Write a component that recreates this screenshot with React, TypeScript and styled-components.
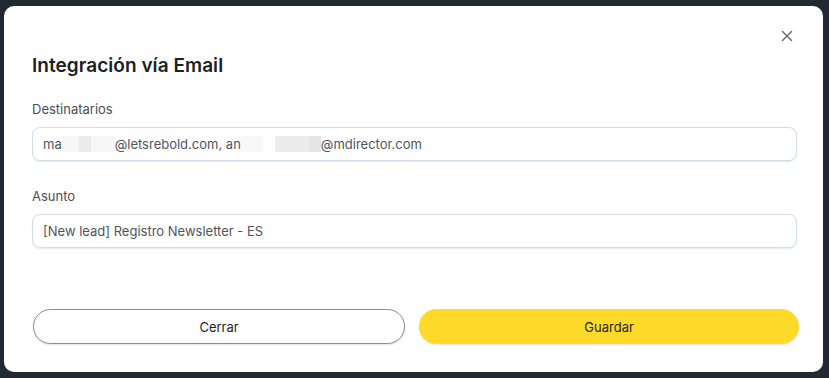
import React from "react";
import styled, { createGlobalStyle } from "styled-components";

const Global = createGlobalStyle`
  html, body { margin: 0; padding: 0; background: #222932; }
  body { font-family: Inter, "Noto Sans", "Liberation Sans", sans-serif; -webkit-font-smoothing: antialiased; }
  * { box-sizing: border-box; }
`;

const Backdrop = styled.div`
  width: 829px;
  height: 378px;
  padding: 6px 6px 6px 4px;
  background: #222932;
`;

const Modal = styled.div`
  position: relative;
  width: 819px;
  height: 366px;
  background: #ffffff;
  border-radius: 10px;
  padding: 48px 26px 28px 28px;
  display: flex;
  flex-direction: column;
`;

const CloseButton = styled.button`
  position: absolute;
  top: 21px;
  right: 27px;
  width: 18px;
  height: 18px;
  padding: 0;
  border: none;
  background: transparent;
  display: flex;
  align-items: center;
  justify-content: center;
  cursor: pointer;
`;

const Title = styled.h2`
  margin: 0 0 21px 0;
  font-size: 19px;
  line-height: 24px;
  font-weight: 600;
  color: #1c2024;
  letter-spacing: 0.05px;
`;

const Field = styled.div<{ $gap?: number }>`
  display: flex;
  flex-direction: column;
  gap: 8px;
  margin-bottom: ${(p) => p.$gap ?? 0}px;
`;

const Label = styled.label`
  font-size: 13px;
  line-height: 20px;
  color: #4a4f57;
  font-weight: 400;
`;

const InputBox = styled.div`
  height: 34px;
  border: 1px solid #cfdbe7;
  border-radius: 8px;
  padding: 0 10px;
  display: flex;
  align-items: center;
  font-size: 13px;
  color: #50555d;
  white-space: nowrap;
  box-shadow: 0 1px 1px rgba(180, 198, 220, 0.35);
`;

const Redact = styled.span<{ $w: number; $c: string }>`
  display: inline-block;
  width: ${(p) => p.$w}px;
  height: 16px;
  background: ${(p) => p.$c};
  vertical-align: middle;
`;

const Spacer = styled.div`
  flex: 1;
`;

const Footer = styled.div`
  display: flex;
  gap: 14px;
  padding: 0 0 0 1px;
  margin-right: -2px;
`;

const Button = styled.button<{ $primary?: boolean; $grow: number }>`
  flex: ${(p) => p.$grow} 1 0;
  height: 35px;
  border-radius: 18px;
  font-family: inherit;
  font-size: 13px;
  color: #1f2328;
  cursor: pointer;
  border: ${(p) => (p.$primary ? "1px solid #fed928" : "1px solid #8c8c8c")};
  background: ${(p) => (p.$primary ? "#fed928" : "#ffffff")};
  box-shadow: 0 1px 2px rgba(0, 0, 0, 0.12);
`;

export default function App() {
  return (
    <>
      <Global />
      <Backdrop>
        <Modal>
          <CloseButton aria-label="Cerrar">
            <svg width="12" height="12" viewBox="0 0 12 12">
              <path d="M1.5 1.5 L10.5 10.5 M10.5 1.5 L1.5 10.5" stroke="#66717f" strokeWidth="1.5" strokeLinecap="round" />
            </svg>
          </CloseButton>
          <Title>Integración vía Email</Title>
          <Field $gap={25}>
            <Label>Destinatarios</Label>
            <InputBox>
              ma
              <Redact $w={17} $c="#f7f7f7" />
              <Redact $w={12} $c="#ebebeb" />
              <Redact $w={24} $c="#f6f6f6" />
              @letsrebold.com, an
              <Redact $w={22} $c="#f8f8f8" />
              <Redact $w={12} $c="#ffffff" />
              <Redact $w={34} $c="#ececec" />
              <Redact $w={12} $c="#e5e5e5" />
              @mdirector.com
            </InputBox>
          </Field>
          <Field>
            <Label>Asunto</Label>
            <InputBox>[New lead] Registro Newsletter - ES</InputBox>
          </Field>
          <Spacer />
          <Footer>
            <Button $grow={372}>Cerrar</Button>
            <Button $grow={380} $primary>Guardar</Button>
          </Footer>
        </Modal>
      </Backdrop>
    </>
  );
}
